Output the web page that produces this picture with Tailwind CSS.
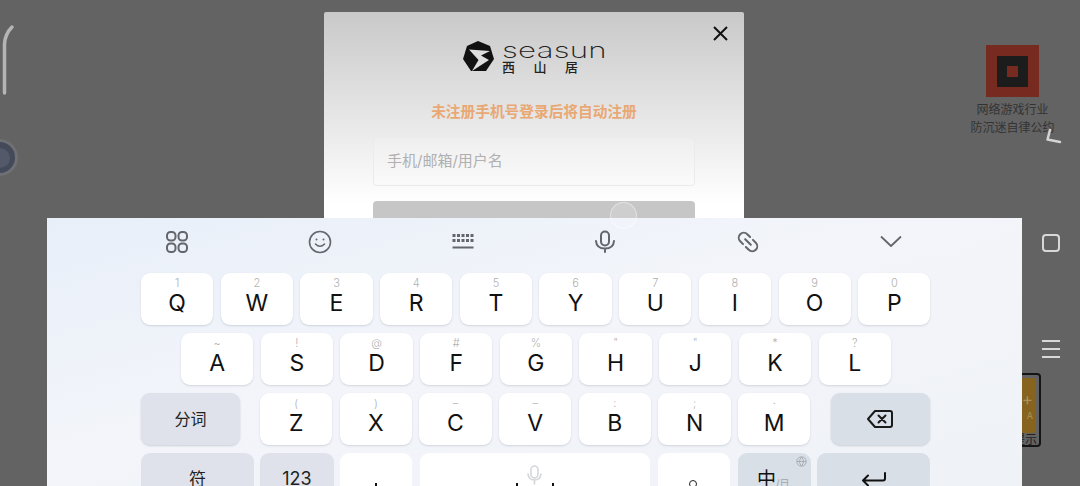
<!doctype html>
<html lang="zh">
<head>
<meta charset="utf-8">
<title>Seasun</title>
<script src="https://cdn.jsdelivr.net/npm/@tailwindcss/browser@4"></script>
</head>
<body class="m-0">
<div class="relative w-[1080px] h-[486px] overflow-hidden bg-[#636363] pt-[12px] font-['Inter','Noto_Sans_CJK_SC',sans-serif]">

  <!-- login modal -->
  <div class="relative ml-[324px] w-[420px] h-[300px] rounded-[2px] bg-linear-to-b from-[#c9c9c9] via-white via-[64%] to-white px-[49px] pt-[29px]">
    <svg class="absolute right-[16px] top-[14px] w-[15px] h-[15px]" viewBox="0 0 15 15" fill="none" stroke="#111" stroke-width="2"><path d="M1 1l13 13M14 1L1 14"/></svg>
    <div class="flex justify-center gap-[8px] h-[31px]">
      <svg class="w-[31px] h-[31px]" viewBox="0 0 31 31"><path fill="#111" d="M15 0l12 5 4 13-8 12H8L0 18 4 5z"/><path fill="#ddd" d="M6 8.500l21 1.500-9 4.500 8 4.500-17 11 6.500-11z"/></svg>
      <div class="w-[103px] relative">
        <div class="absolute left-0 top-[2px] origin-left scale-x-[1.42] text-[22px] leading-[14px] font-extralight text-[#222] tracking-[0.2px] font-['Inter',sans-serif]">seasun</div>
        <div class="absolute left-0 top-[20px] w-[76px] flex justify-between text-[13px] leading-[13px] font-medium text-[#222]"><span>西</span><span>山</span><span>居</span></div>
      </div>
    </div>
    <div class="mt-[30px] text-center text-[14.700px] leading-[20px] font-semibold text-[#e9a873] whitespace-nowrap">未注册手机号登录后将自动注册</div>
    <div class="mt-[15px] h-[49px] rounded-[4px] border border-[#ebebeb] bg-white/15 flex items-center pl-[13px] text-[15px] text-[#b0b0b0]">手机/邮箱/用户名</div>
    <div class="mt-[15px] h-[60px] rounded-[4px] bg-[#c6c6c6]"></div>
  </div>

  <!-- things floating on the game screen -->
  <svg class="absolute left-0 top-[20px] w-[16px] h-[80px]" viewBox="0 0 16 80" fill="none" stroke="#b5b5b5" stroke-width="3.500" stroke-linecap="round"><path d="M4.500 73V24Q5 14 12 7"/></svg>
  <div class="absolute left-[-19px] top-[139px] w-[37px] h-[37px] rounded-full border-[3px] border-[#6e7074] bg-[#444a59] flex items-center justify-center"><div class="w-[20px] h-[20px] rounded-full bg-[#535968]"></div></div>

  <div class="absolute left-[970px] top-[45px] w-[85px] flex flex-col items-center">
    <div class="w-[53px] h-[52px] bg-[#772a1f] flex items-center justify-center"><div class="w-[31px] h-[31px] bg-[#1d1c1c] flex items-center justify-center"><div class="w-[11px] h-[11px] bg-[#772a1f]"></div></div></div>
    <div class="mt-[4px] text-[12px] leading-[18px] text-[#333] text-center whitespace-nowrap">网络游戏行业<br>防沉迷自律公约</div>
  </div>

  <svg class="absolute left-[1042px] top-[126px] w-[20px] h-[20px]" viewBox="0 0 20 20" fill="none" stroke="#d4d4d4" stroke-width="2.500" stroke-linecap="round" stroke-linejoin="round"><path d="M8 4L5.500 13.500 18 16"/></svg>
  <div class="absolute left-[1042px] top-[234px] w-[18px] h-[18px] rounded-[4px] border-2 border-[#d8d8d8]"></div>
  <div class="absolute left-[1042px] top-[340px] w-[18px] flex flex-col gap-[6px]">
    <div class="h-[2px] bg-[#d8d8d8]"></div><div class="h-[2px] bg-[#d8d8d8]"></div><div class="h-[2px] bg-[#d8d8d8]"></div>
  </div>
  <div class="absolute left-[1000px] top-[373px] w-[41px] h-[74px] rounded-[4px] border-2 border-[#151515]">
    <div class="ml-[4px] mr-[3px] mt-[3px] h-[55px] rounded-[3px] bg-[#86641f] flex flex-col items-end justify-center pr-[3px] text-[#ab915a]"><span class="text-[17px] leading-[20px]">+</span><span class="text-[9px] leading-[14px]">A</span></div>
    <div class="text-right pr-[2px] text-[12px] leading-[14px] text-[#222]">提示</div>
  </div>

  <!-- keyboard -->
  <div class="absolute left-[47px] top-[218px] w-[975px] h-[268px] overflow-hidden bg-linear-to-br from-[#e8eff9] via-[#f3f5fa] via-[45%] to-[#eff2f7]">
    <!-- toolbar -->
    <div class="h-[55px] flex items-center pl-[118px] pb-[7px] text-[#63666c]">
      <div class="flex w-[738px] justify-between items-center">
        <svg class="w-[24px] h-[24px]" viewBox="0 0 24 24" fill="none" stroke="currentColor" stroke-width="2"><rect x="2" y="2" width="8.500" height="8.500" rx="3.500"/><rect x="13.500" y="2" width="8.500" height="8.500" rx="3.500"/><rect x="2" y="13.500" width="8.500" height="8.500" rx="3.500"/><rect x="13.500" y="13.500" width="8.500" height="8.500" rx="3.500"/></svg>
        <svg class="w-[24px] h-[24px]" viewBox="0 0 24 24" fill="none" stroke="currentColor" stroke-width="1.600" stroke-linecap="round"><circle cx="12" cy="12" r="10.500"/><path d="M7.500 14q4.500 4.500 9 0"/><circle cx="8.500" cy="9.500" r="1" fill="currentColor" stroke="none"/><circle cx="15.500" cy="9.500" r="1" fill="currentColor" stroke="none"/></svg>
        <svg class="w-[24px] h-[24px]" viewBox="0 0 24 24" fill="currentColor"><path d="M1.500 4h3v3h-3zM6 4h3v3H6zM10.500 4h3v3h-3zM15 4h3v3h-3zM19.500 4h3v3h-3zM1.500 9h3v3h-3zM6 9h3v3H6zM10.500 9h3v3h-3zM15 9h3v3h-3zM19.500 9h3v3h-3zM1.500 16.500h21v2h-21z"/></svg>
        <svg class="w-[24px] h-[24px]" viewBox="0 0 24 24" fill="none" stroke="currentColor" stroke-width="2" stroke-linecap="round"><rect x="8" y="1.500" width="8" height="14" rx="4"/><path d="M3 11q.500 7.500 9 7.500t9-7.500M12 18.500V22"/></svg>
        <svg class="w-[24px] h-[24px]" viewBox="0 0 24 24" fill="none" stroke="currentColor" stroke-width="2" stroke-linecap="round"><g transform="rotate(45 12 12)"><path d="M10 17H6a5 5 0 0 1 0-10h4"/><path d="M14 7h4a5 5 0 0 1 0 10h-4"/><path d="M8 12h8"/></g></svg>
        <svg class="w-[24px] h-[24px]" viewBox="0 0 24 24" fill="none" stroke="currentColor" stroke-width="1.800" stroke-linecap="round" stroke-linejoin="round"><path d="M2.500 7l9.500 9 9.500-9"/></svg>
      </div>
    </div>

    <!-- key rows -->
    <div class="pl-[94px] flex flex-col gap-[8px] text-[#111]">
      <div class="flex gap-[7.400px]">
        <div class="w-[72.300px] h-[52px] rounded-[9px] bg-white shadow-[0_1px_2px_rgba(90,100,120,.22)] flex flex-col items-center pt-[3px]"><span class="text-[11px] font-light leading-[14px] text-[#b0b0b0]">1</span><span class="text-[23px] leading-[26px]">Q</span></div>
        <div class="w-[72.300px] h-[52px] rounded-[9px] bg-white shadow-[0_1px_2px_rgba(90,100,120,.22)] flex flex-col items-center pt-[3px]"><span class="text-[11px] font-light leading-[14px] text-[#b0b0b0]">2</span><span class="text-[23px] leading-[26px]">W</span></div>
        <div class="w-[72.300px] h-[52px] rounded-[9px] bg-white shadow-[0_1px_2px_rgba(90,100,120,.22)] flex flex-col items-center pt-[3px]"><span class="text-[11px] font-light leading-[14px] text-[#b0b0b0]">3</span><span class="text-[23px] leading-[26px]">E</span></div>
        <div class="w-[72.300px] h-[52px] rounded-[9px] bg-white shadow-[0_1px_2px_rgba(90,100,120,.22)] flex flex-col items-center pt-[3px]"><span class="text-[11px] font-light leading-[14px] text-[#b0b0b0]">4</span><span class="text-[23px] leading-[26px]">R</span></div>
        <div class="w-[72.300px] h-[52px] rounded-[9px] bg-white shadow-[0_1px_2px_rgba(90,100,120,.22)] flex flex-col items-center pt-[3px]"><span class="text-[11px] font-light leading-[14px] text-[#b0b0b0]">5</span><span class="text-[23px] leading-[26px]">T</span></div>
        <div class="w-[72.300px] h-[52px] rounded-[9px] bg-white shadow-[0_1px_2px_rgba(90,100,120,.22)] flex flex-col items-center pt-[3px]"><span class="text-[11px] font-light leading-[14px] text-[#b0b0b0]">6</span><span class="text-[23px] leading-[26px]">Y</span></div>
        <div class="w-[72.300px] h-[52px] rounded-[9px] bg-white shadow-[0_1px_2px_rgba(90,100,120,.22)] flex flex-col items-center pt-[3px]"><span class="text-[11px] font-light leading-[14px] text-[#b0b0b0]">7</span><span class="text-[23px] leading-[26px]">U</span></div>
        <div class="w-[72.300px] h-[52px] rounded-[9px] bg-white shadow-[0_1px_2px_rgba(90,100,120,.22)] flex flex-col items-center pt-[3px]"><span class="text-[11px] font-light leading-[14px] text-[#b0b0b0]">8</span><span class="text-[23px] leading-[26px]">I</span></div>
        <div class="w-[72.300px] h-[52px] rounded-[9px] bg-white shadow-[0_1px_2px_rgba(90,100,120,.22)] flex flex-col items-center pt-[3px]"><span class="text-[11px] font-light leading-[14px] text-[#b0b0b0]">9</span><span class="text-[23px] leading-[26px]">O</span></div>
        <div class="w-[72.300px] h-[52px] rounded-[9px] bg-white shadow-[0_1px_2px_rgba(90,100,120,.22)] flex flex-col items-center pt-[3px]"><span class="text-[11px] font-light leading-[14px] text-[#b0b0b0]">0</span><span class="text-[23px] leading-[26px]">P</span></div>
      </div>
      <div class="flex gap-[7.400px] pl-[40px]">
        <div class="w-[72.300px] h-[52px] rounded-[9px] bg-white shadow-[0_1px_2px_rgba(90,100,120,.22)] flex flex-col items-center pt-[3px]"><span class="text-[11px] font-light leading-[14px] text-[#b0b0b0]">~</span><span class="text-[23px] leading-[26px]">A</span></div>
        <div class="w-[72.300px] h-[52px] rounded-[9px] bg-white shadow-[0_1px_2px_rgba(90,100,120,.22)] flex flex-col items-center pt-[3px]"><span class="text-[11px] font-light leading-[14px] text-[#b0b0b0]">!</span><span class="text-[23px] leading-[26px]">S</span></div>
        <div class="w-[72.300px] h-[52px] rounded-[9px] bg-white shadow-[0_1px_2px_rgba(90,100,120,.22)] flex flex-col items-center pt-[3px]"><span class="text-[11px] font-light leading-[14px] text-[#b0b0b0]">@</span><span class="text-[23px] leading-[26px]">D</span></div>
        <div class="w-[72.300px] h-[52px] rounded-[9px] bg-white shadow-[0_1px_2px_rgba(90,100,120,.22)] flex flex-col items-center pt-[3px]"><span class="text-[11px] font-light leading-[14px] text-[#b0b0b0]">#</span><span class="text-[23px] leading-[26px]">F</span></div>
        <div class="w-[72.300px] h-[52px] rounded-[9px] bg-white shadow-[0_1px_2px_rgba(90,100,120,.22)] flex flex-col items-center pt-[3px]"><span class="text-[11px] font-light leading-[14px] text-[#b0b0b0]">%</span><span class="text-[23px] leading-[26px]">G</span></div>
        <div class="w-[72.300px] h-[52px] rounded-[9px] bg-white shadow-[0_1px_2px_rgba(90,100,120,.22)] flex flex-col items-center pt-[3px]"><span class="text-[11px] font-light leading-[14px] text-[#b0b0b0]">"</span><span class="text-[23px] leading-[26px]">H</span></div>
        <div class="w-[72.300px] h-[52px] rounded-[9px] bg-white shadow-[0_1px_2px_rgba(90,100,120,.22)] flex flex-col items-center pt-[3px]"><span class="text-[11px] font-light leading-[14px] text-[#b0b0b0]">"</span><span class="text-[23px] leading-[26px]">J</span></div>
        <div class="w-[72.300px] h-[52px] rounded-[9px] bg-white shadow-[0_1px_2px_rgba(90,100,120,.22)] flex flex-col items-center pt-[3px]"><span class="text-[11px] font-light leading-[14px] text-[#b0b0b0]">*</span><span class="text-[23px] leading-[26px]">K</span></div>
        <div class="w-[72.300px] h-[52px] rounded-[9px] bg-white shadow-[0_1px_2px_rgba(90,100,120,.22)] flex flex-col items-center pt-[3px]"><span class="text-[11px] font-light leading-[14px] text-[#b0b0b0]">?</span><span class="text-[23px] leading-[26px]">L</span></div>
      </div>
      <div class="flex gap-[7.400px]">
        <div class="w-[99px] h-[52px] mr-[12.600px] rounded-[9px] bg-[#dfe2ea] shadow-[0_1px_2px_rgba(90,100,120,.25)] flex items-center justify-center text-[16px] text-[#222]">分词</div>
        <div class="w-[72.300px] h-[52px] rounded-[9px] bg-white shadow-[0_1px_2px_rgba(90,100,120,.22)] flex flex-col items-center pt-[3px]"><span class="text-[11px] font-light leading-[14px] text-[#b0b0b0]">(</span><span class="text-[23px] leading-[26px]">Z</span></div>
        <div class="w-[72.300px] h-[52px] rounded-[9px] bg-white shadow-[0_1px_2px_rgba(90,100,120,.22)] flex flex-col items-center pt-[3px]"><span class="text-[11px] font-light leading-[14px] text-[#b0b0b0]">)</span><span class="text-[23px] leading-[26px]">X</span></div>
        <div class="w-[72.300px] h-[52px] rounded-[9px] bg-white shadow-[0_1px_2px_rgba(90,100,120,.22)] flex flex-col items-center pt-[3px]"><span class="text-[11px] font-light leading-[14px] text-[#b0b0b0]">–</span><span class="text-[23px] leading-[26px]">C</span></div>
        <div class="w-[72.300px] h-[52px] rounded-[9px] bg-white shadow-[0_1px_2px_rgba(90,100,120,.22)] flex flex-col items-center pt-[3px]"><span class="text-[11px] font-light leading-[14px] text-[#b0b0b0]">–</span><span class="text-[23px] leading-[26px]">V</span></div>
        <div class="w-[72.300px] h-[52px] rounded-[9px] bg-white shadow-[0_1px_2px_rgba(90,100,120,.22)] flex flex-col items-center pt-[3px]"><span class="text-[11px] font-light leading-[14px] text-[#b0b0b0]">:</span><span class="text-[23px] leading-[26px]">B</span></div>
        <div class="w-[72.300px] h-[52px] rounded-[9px] bg-white shadow-[0_1px_2px_rgba(90,100,120,.22)] flex flex-col items-center pt-[3px]"><span class="text-[11px] font-light leading-[14px] text-[#b0b0b0]">;</span><span class="text-[23px] leading-[26px]">N</span></div>
        <div class="w-[72.300px] h-[52px] rounded-[9px] bg-white shadow-[0_1px_2px_rgba(90,100,120,.22)] flex flex-col items-center pt-[3px]"><span class="text-[11px] font-light leading-[14px] text-[#b0b0b0]">·</span><span class="text-[23px] leading-[26px]">M</span></div>
        <div class="w-[99px] h-[52px] ml-[13px] rounded-[9px] bg-[#d9dfe7] shadow-[0_1px_2px_rgba(90,100,120,.25)] flex items-center justify-center">
          <svg class="w-[28px] h-[20px]" viewBox="0 0 28 20" fill="none" stroke="#1a1a1a" stroke-width="2" stroke-linejoin="round" stroke-linecap="round"><path d="M9 2h15a2 2 0 0 1 2 2v12a2 2 0 0 1-2 2H9L2 10z"/><path d="M12.500 6.500l7 7M19.500 6.500l-7 7"/></svg>
        </div>
      </div>
      <div class="flex gap-[6px]">
        <div class="w-[113px] h-[52px] rounded-[9px] bg-[#dfe2ea] flex justify-center pt-[14px] text-[17px] leading-[24px] text-[#222]">符</div>
        <div class="w-[74px] h-[52px] rounded-[9px] bg-[#dfe2ea] flex justify-center pt-[14px] text-[18px] leading-[24px] text-[#222]">123</div>
        <div class="w-[72px] h-[52px] rounded-[9px] bg-white relative"><div class="absolute left-[35px] top-[30px] w-[2px] h-[3px] bg-[#111]"></div></div>
        <div class="w-[230px] h-[52px] ml-[2px] rounded-[9px] bg-white relative">
          <svg class="absolute left-[107px] top-[12px] w-[15px] h-[20px]" viewBox="0 0 15 20" fill="none" stroke="#d4d6da" stroke-width="1.600" stroke-linecap="round"><rect x="4" y="1" width="7" height="12" rx="3.500"/><path d="M1 9q.500 6 6.500 6t6.500-6M7.500 15v4"/></svg>
          <div class="absolute left-[96px] top-[30px] w-[2px] h-[3px] bg-[#111]"></div>
          <div class="absolute left-[132px] top-[30px] w-[2px] h-[3px] bg-[#111]"></div>
        </div>
        <div class="w-[72px] h-[52px] ml-[2px] rounded-[9px] bg-white relative"><div class="absolute left-[31px] top-[27px] w-[8px] h-[8px] rounded-full border-[1.500px] border-[#222]"></div></div>
        <div class="w-[73px] h-[52px] ml-[2px] rounded-[9px] bg-[#d9dfe7] relative">
          <svg class="absolute right-[4px] top-[3px] w-[11px] h-[11px]" viewBox="0 0 11 11" fill="none" stroke="#a9adb3"><circle cx="5.500" cy="5.500" r="4.700"/><path d="M1 5.500h9M5.500 1q-4 4.500 0 9q4-4.500 0-9"/></svg>
          <div class="absolute left-[19px] top-[15px] flex items-end whitespace-nowrap"><span class="text-[19px] leading-[24px] text-[#111]">中</span><span class="text-[10px] leading-[18px] text-[#a3a6ac]">/日</span></div>
        </div>
        <div class="w-[113px] h-[52px] rounded-[9px] bg-[#d9dfe7] flex justify-center pt-[19px]">
          <svg class="w-[26px] h-[16px]" viewBox="0 0 26 16" fill="none" stroke="#111" stroke-width="2" stroke-linecap="round" stroke-linejoin="round"><path d="M24 1v5.500a2 2 0 0 1-2 2H2M7 3.500L2 8.500l5 5"/></svg>
        </div>
      </div>
    </div>
  </div>

  <!-- touch indicator lies over keyboard -->
  <div class="absolute left-[610px] top-[202px] w-[27px] h-[27px] rounded-full border border-white/40 bg-white/15"></div>
</div>
</body>
</html>
